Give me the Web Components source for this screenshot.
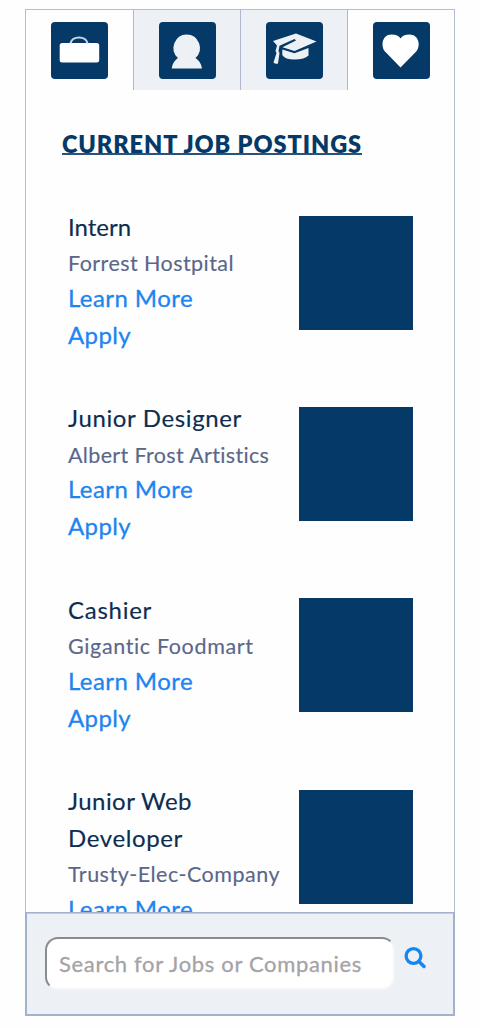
<!DOCTYPE html>
<html lang="en">
<head>
<meta charset="utf-8">
<title>Current Job Postings</title>
<style>
body{margin:0;background:#fefefe;font-family:Lato,"Open Sans",sans-serif}
</style>
</head>
<body>
<job-app></job-app>
<script>
// One line of text whose tracking is adjusted to fill a given width.
customElements.define('fit-text', class extends HTMLElement {
  connectedCallback() {
    const root = this.attachShadow({mode: 'open'});
    root.innerHTML = `<style>:host{display:block;white-space:nowrap}span{display:inline-block}</style><span><slot></slot></span>`;
    const span = root.querySelector('span');
    const n = this.textContent.length;
    const gap = (Number(this.getAttribute('width')) - span.getBoundingClientRect().width) / n;
    this.style.letterSpacing = gap.toFixed(3) + 'px';
  }
});

const icons = {
  briefcase: `<rect x="8.700" y="21" width="39.500" height="19.500" rx="2.500" fill="#fff"/><path d="M19.500 21.500C21 13.500 35 13.500 36.500 21.500" fill="none" stroke="#c9d6e2" stroke-width="2.200"/>`,
  person: `<path d="M27.700 12.500a13.500 13.500 0 0 1 8.800 23.500c3.500 2.300 5.800 5.500 6.500 10.500H12.700c.7-5 3-8.200 6.200-10.500A13.500 13.500 0 0 1 27.700 12.500z" fill="#edf1f6"/>`,
  cap: `<path d="M7 19L30 11.500L50.500 19.500L28.500 29L16.500 25.200L30 18.500L28.500 17L13.500 23.800L12.500 29L13.500 31L12 41.500Q9.500 42.500 7.500 40.500L10.500 31L9.500 29L11 23.500z" fill="#edf1f6"/><path d="M16.300 27.500L28.500 31.200L42.500 26V33.500Q38.500 37.500 28.500 37.500Q19 37.500 16.300 33z" fill="#edf1f6"/>`,
  heart: `<path d="M27.500 45.500L12 29.500C7.500 24 9 12.500 18.500 12.500C23 12.500 26 14 27.500 16.500C29 14 32 12.500 36.500 12.500C46 12.500 48 24 43.200 29.500z" fill="#fff"/>`
};

customElements.define('nav-tab', class extends HTMLElement {
  connectedCallback() {
    this.attachShadow({mode: 'open'}).innerHTML = `<style>
      :host{display:flex;justify-content:center;box-sizing:border-box;padding-top:12px;height:80px}
      :host([shaded]){background:#edf0f5}
      :host([line]){border-left:1px solid #b0b8d0}
      svg{display:block;width:57px;height:57px;background:#053967;border-radius:4px}
    </style><svg viewBox="0 0 57 57">${icons[this.getAttribute('icon')]}</svg>`;
  }
});

customElements.define('job-card', class extends HTMLElement {
  connectedCallback() {
    this.attachShadow({mode: 'open'}).innerHTML = `<style>
      :host{display:grid;grid-template-columns:231px 114px;padding-left:42px;height:191.400px;align-items:start}
      .pic{width:114px;height:114px;margin-top:7.600px;background:#053967}
      ::slotted(*){font-size:24px;line-height:37px;color:#0c2d50;-webkit-text-stroke:.15px}
      ::slotted(.co){font-size:21.500px;line-height:34.500px;color:#5a678a;margin:1.200px 0 -1.700px}
      ::slotted(.link){color:#1d84f0;-webkit-text-stroke:.3px}
    </style><div><slot></slot></div><div class="pic"></div>`;
  }
});

customElements.define('search-bar', class extends HTMLElement {
  connectedCallback() {
    this.attachShadow({mode: 'open'}).innerHTML = `<style>
      :host{display:flex;align-items:flex-start;box-sizing:border-box;height:104px;padding:24px 0 0 18px;background:#edf0f5;border:solid #a3b2cc;border-width:1px 2px 2px 2px;box-shadow:inset 0 1px #c3cbdc}
      .box{box-sizing:border-box;width:350px;height:53px;border:2px solid;border-color:#8b8b8e #f4f5f7 #f4f5f7 #8b8b8e;border-radius:13px;background:#fff;padding-left:12px;line-height:49px;font-size:22px;color:#a5a3a6;-webkit-text-stroke:.3px}
      svg{width:23px;height:24px;margin:9px 0 0 9px}
    </style><div class="box"><fit-text width="303">Search for Jobs or Companies</fit-text></div>
    <svg viewBox="0 0 23 24" fill="none" stroke="#1687ee"><circle cx="9.500" cy="10" r="7.400" stroke-width="3.300"/><path d="M15 15.500L20 20.500" stroke-width="3.500" stroke-linecap="round"/></svg>`;
  }
});

customElements.define('job-app', class extends HTMLElement {
  connectedCallback() {
    this.attachShadow({mode: 'open'}).innerHTML = `<style>
      :host{display:flex;flex-direction:column;box-sizing:border-box;height:1028px;padding:9px 25px 12px 25px}
      main{flex:1;min-height:0;display:flex;flex-direction:column;overflow:hidden;border:1px solid #b5bdd4;border-bottom:0}
      search-bar{flex:none}
      nav{display:grid;grid-template-columns:107px 107px 107px 1fr;flex:none}
      h1{margin:0;padding:36px 0 0 36px;font-size:23.500px;font-weight:800;color:#053967;flex:none;height:46px}
      h1 fit-text{width:300px;height:27px;line-height:36px;border-bottom:2px solid #2a5379}
      .list{flex:1;min-height:0;overflow:hidden;padding-top:36px}
    </style>
    <main>
      <nav><nav-tab icon="briefcase"></nav-tab><nav-tab icon="person" shaded line></nav-tab><nav-tab icon="cap" shaded line></nav-tab><nav-tab icon="heart" line></nav-tab></nav>
      <h1><fit-text width="300">CURRENT JOB POSTINGS</fit-text></h1>
      <div class="list">
        <job-card><fit-text width="63">Intern</fit-text><fit-text class="co" width="166">Forrest Hostpital</fit-text><fit-text class="link" width="125">Learn More</fit-text><fit-text class="link" width="63">Apply</fit-text></job-card>
        <job-card><fit-text width="174">Junior Designer</fit-text><fit-text class="co" width="202">Albert Frost Artistics</fit-text><fit-text class="link" width="125">Learn More</fit-text><fit-text class="link" width="63">Apply</fit-text></job-card>
        <job-card><fit-text width="84">Cashier</fit-text><fit-text class="co" width="186">Gigantic Foodmart</fit-text><fit-text class="link" width="125">Learn More</fit-text><fit-text class="link" width="63">Apply</fit-text></job-card>
        <job-card><fit-text width="124">Junior Web</fit-text><fit-text width="115">Developer</fit-text><fit-text class="co" width="212">Trusty-Elec-Company</fit-text><fit-text class="link" width="125">Learn More</fit-text></job-card>
      </div>
    </main>
    <search-bar></search-bar>`;
  }
});
</script>
</body>
</html>
